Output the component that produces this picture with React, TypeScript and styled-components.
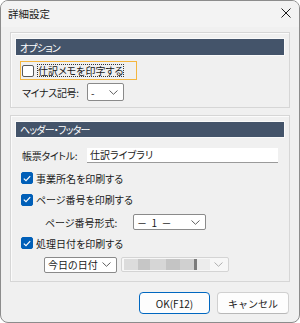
import React from 'react';
import styled, { createGlobalStyle } from 'styled-components';

const GlobalStyle = createGlobalStyle`
  html, body {
    margin: 0;
    padding: 0;
    background: #ffffff;
  }
  body {
    font-family: "Noto Sans CJK JP", "Noto Sans", sans-serif;
    font-feature-settings: "palt";
  }
`;

const Window = styled.div`
  box-sizing: border-box;
  width: 300px;
  height: 323px;
  border: 1px solid #8c8c8c;
  border-radius: 8px;
  background: #f0f0f0;
  display: flex;
  flex-direction: column;
  overflow: hidden;
  color: #1a1a1a;
  font-size: 10px;
`;

const TitleBar = styled.div`
  height: 26px;
  display: flex;
  align-items: center;
  justify-content: space-between;
  padding: 0 6px 0 7px;
  background: #f3f3f3;
`;

const Title = styled.span`
  font-size: 10.5px;
  margin-top: -1px;
`;

const CloseButton = styled.span`
  display: flex;
  align-items: center;
  width: 12px;
  height: 12px;
  margin-top: -3px;
`;

const Body = styled.div`
  flex: 1;
  display: flex;
  flex-direction: column;
  padding: 5px 9px 0 9px;
`;

const GroupBox = styled.div<{ $top?: number }>`
  margin-top: ${p => p.$top ?? 0}px;
  border: 1px solid #d6d6d6;
  box-shadow: inset 1px 1px 0 #fbfbfb;
  padding: 6px 5px 5px 5px;
  display: flex;
  flex-direction: column;
`;

const GroupHeader = styled.div<{ $h?: number }>`
  height: ${p => p.$h ?? 16}px;
  background: #44546a;
  box-shadow: 0 0 0 1px #fafafa;
  color: #ffffff;
  display: flex;
  align-items: center;
  padding-left: 4px;
  letter-spacing: -0.8px;
`;

const Row = styled.div<{ $h: number; $top?: number; $indent?: number }>`
  height: ${p => p.$h}px;
  margin-top: ${p => p.$top ?? 0}px;
  padding-left: ${p => p.$indent ?? 6}px;
  display: flex;
  align-items: center;
  gap: 2px;
`;

const FocusBox = styled.div`
  box-sizing: border-box;
  width: 117px;
  height: 19px;
  margin-left: 4px;
  border: 1px solid #f4b63f;
  display: flex;
  align-items: center;
  padding-left: 1px;
  gap: 2px;
`;

const Label = styled.span<{ $w?: number; $ls?: number }>`
  ${p => (p.$w ? `width: ${p.$w}px;` : '')}
  flex: none;
  white-space: nowrap;
  letter-spacing: ${p => p.$ls ?? 0}px;
`;

const FocusLabel = styled.span`
  outline: 1px dotted #333;
  outline-offset: -1px;
  padding: 0 1px;
  line-height: 13px;
  white-space: nowrap;
`;

const Box = styled.span<{ $checked?: boolean }>`
  box-sizing: border-box;
  width: 12px;
  height: 12px;
  border-radius: 2px;
  flex: none;
  display: flex;
  align-items: center;
  justify-content: center;
  background: ${p => (p.$checked ? '#005fb8' : '#ffffff')};
  border: 1px solid ${p => (p.$checked ? '#005fb8' : '#5a5a5a')};
  margin-right: 1px;
`;

const Select = styled.div<{ $w: number; $h: number; $disabled?: boolean }>`
  box-sizing: border-box;
  width: ${p => p.$w}px;
  height: ${p => p.$h}px;
  border: 1px solid ${p => (p.$disabled ? '#d4d4d4' : '#8a8a8a')};
  border-radius: 2px;
  background: ${p => (p.$disabled ? '#f7f7f7' : '#ffffff')};
  display: flex;
  align-items: center;
  justify-content: space-between;
  padding: 0 5px 0 3px;
  flex: none;
`;

const SelectText = styled.span`
  white-space: pre;
`;

const Redacted = styled.span`
  width: 86px;
  height: 11px;
  filter: blur(0.6px);
  background: linear-gradient(
    90deg,
    #dcdcdc 0 14px,
    #c6c6c6 14px 26px,
    #d6d6d6 26px 42px,
    #c4c4c4 42px 56px,
    #d0d0d0 56px 70px,
    #7c7c7c 70px 73px,
    #ececec 73px 86px
  );
`;

const TextInput = styled.div`
  box-sizing: border-box;
  width: 191px;
  height: 15px;
  background: #ffffff;
  border-bottom: 1px solid #9a9a9a;
  display: flex;
  align-items: center;
  padding-left: 3px;
`;

const ButtonRow = styled.div`
  display: flex;
  justify-content: flex-end;
  gap: 7px;
  margin-top: 10px;
  padding-right: 1px;
`;

const Button = styled.button<{ $primary?: boolean }>`
  box-sizing: border-box;
  width: ${p => (p.$primary ? 71 : 72)}px;
  height: 22px;
  border-radius: 4px;
  background: #fdfdfd;
  border: 1px solid ${p => (p.$primary ? '#0067c0' : '#d0d0d0')};
  border-bottom-color: ${p => (p.$primary ? '#0067c0' : '#b8b8b8')};
  font-family: inherit;
  font-size: 10px;
  color: #1a1a1a;
  padding: 0;
`;

const Chevron = ({ disabled }: { disabled?: boolean }) => (
  <svg width="9" height="5" viewBox="0 0 9 5">
    <path d="M0.5 0.5 L4.5 4.3 L8.5 0.5" fill="none" stroke={disabled ? '#b0b0b0' : '#606060'} strokeWidth="1" />
  </svg>
);

const Check = ({ checked, label }: { checked?: boolean; label: string }) => (
  <>
    <Box $checked={checked}>
      {checked && (
        <svg width="8" height="7" viewBox="0 0 8 7">
          <path d="M0.8 3.6 L3 5.7 L7.2 1.1" fill="none" stroke="#ffffff" strokeWidth="1.2" />
        </svg>
      )}
    </Box>
    <Label>{label}</Label>
  </>
);

export default function App() {
  return (
    <>
      <GlobalStyle />
      <Window>
        <TitleBar>
          <Title>詳細設定</Title>
          <CloseButton>
            <svg width="10" height="10" viewBox="0 0 10 10">
              <path d="M0.5 0.5 L9.5 9.5 M9.5 0.5 L0.5 9.5" stroke="#1a1a1a" strokeWidth="1" />
            </svg>
          </CloseButton>
        </TitleBar>
        <Body>
          <GroupBox>
            <GroupHeader>オプション</GroupHeader>
            <Row $h={19} $top={6} $indent={0}>
              <FocusBox>
                <Box />
                <FocusLabel>仕訳メモを印字する</FocusLabel>
              </FocusBox>
            </Row>
            <Row $h={18} $top={3}>
              <Label $w={63} $ls={-0.3}>マイナス記号:</Label>
              <Select $w={37} $h={18}>
                <SelectText>-</SelectText>
                <Chevron />
              </Select>
            </Row>
            <Row $h={1} />
          </GroupBox>
          <GroupBox $top={7}>
            <GroupHeader $h={15}>ヘッダー・フッター</GroupHeader>
            <Row $h={16} $top={10}>
              <Label $w={63} $ls={-0.3}>帳票タイトル:</Label>
              <TextInput>仕訳ライブラリ</TextInput>
            </Row>
            <Row $h={22} $top={4} $indent={5}>
              <Check checked label="事業所名を印刷する" />
            </Row>
            <Row $h={21} $indent={5}>
              <Check checked label="ページ番号を印刷する" />
            </Row>
            <Row $h={20} $top={2} $indent={29}>
              <Label $w={86}>ページ番号形式:</Label>
              <Select $w={73} $h={16}>
                <SelectText>－  1  －</SelectText>
                <Chevron />
              </Select>
            </Row>
            <Row $h={22} $indent={5}>
              <Check checked label="処理日付を印刷する" />
            </Row>
            <Row $h={17} $top={2} $indent={28}>
              <Select $w={73} $h={16}>
                <SelectText>今日の日付</SelectText>
                <Chevron />
              </Select>
              <Select $w={108} $h={15} $disabled style={{ marginLeft: 2, paddingLeft: 2 }}>
                <Redacted />
                <Chevron disabled />
              </Select>
            </Row>
            <Row $h={3} />
          </GroupBox>
          <ButtonRow>
            <Button $primary>OK(F12)</Button>
            <Button>キャンセル</Button>
          </ButtonRow>
        </Body>
      </Window>
    </>
  );
}
